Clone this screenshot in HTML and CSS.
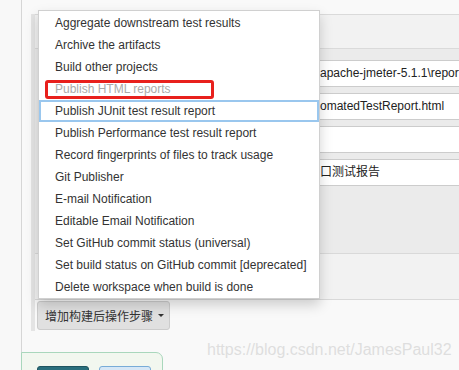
FILE: index.html
```html
<!DOCTYPE html>
<html lang="zh">
<head>
<meta charset="utf-8">
<title>Post-build actions</title>
<link rel="stylesheet" href="styles.css">
</head>
<body>
<div class="page">
  <aside class="side"></aside>
  <main class="main">
    <section class="chunk">
      <div class="chunk-head"></div>
      <div class="chunk-body">
        <div class="field"><span class="lbl"></span><div class="input">apache-jmeter-5.1.1\report</div></div>
        <div class="field"><span class="lbl"></span><div class="input">omatedTestReport.html</div></div>
        <div class="field"><span class="lbl"></span><div class="input"></div></div>
        <div class="field"><span class="lbl"></span><div class="input">口测试报告</div></div>
      </div>
      <div class="chunk-foot"></div>
      <div class="btn-row">
        <button class="add-btn">增加构建后操作步骤<span class="caret"></span></button>
      </div>
    </section>
    <div class="bottom-bar">
      <button class="btn save" aria-label="保存"></button>
      <button class="btn apply" aria-label="应用"></button>
    </div>
  </main>

  <ul class="menu">
    <li class="item">Aggregate downstream test results</li>
    <li class="item">Archive the artifacts</li>
    <li class="item">Build other projects</li>
    <li class="item disabled">Publish HTML reports<span class="mark"></span></li>
    <li class="item active">Publish JUnit test result report</li>
    <li class="item">Publish Performance test result report</li>
    <li class="item">Record fingerprints of files to track usage</li>
    <li class="item">Git Publisher</li>
    <li class="item">E-mail Notification</li>
    <li class="item">Editable Email Notification</li>
    <li class="item">Set GitHub commit status (universal)</li>
    <li class="item">Set build status on GitHub commit [deprecated]</li>
    <li class="item">Delete workspace when build is done</li>
  </ul>

  <div class="watermark">https://blog.csdn.net/JamesPaul32</div>
</div>
</body>
</html>
```

FILE: styles.css
```css
html, body {
  margin: 0;
  padding: 0;
}

body {
  font-family: "Liberation Sans", Arial, "Noto Sans CJK SC", sans-serif;
  font-size: 12px;
  color: #333;
  background: #f8f8f8;
}

.page {
  position: relative;
  display: flex;
  width: 459px;
  height: 370px;
  overflow: hidden;
}

.side {
  flex: none;
  width: 21px;
  background: #f8f8f8;
}

.main {
  flex: 1;
  min-width: 0;
  border-left: 1px solid #d6d6d6;
  background: #f9f9f9;
  padding-left: 9px;
}

.chunk {
  margin-top: 14px;
  border-left: 4px solid #e4e4e4;
}

.chunk-head {
  height: 33px;
  background: #f2f2f2;
  border-top: 1px solid #dadada;
  border-bottom: 1px solid #dadada;
}

.chunk-body {
  display: flex;
  flex-direction: column;
  gap: 6px;
  padding: 11px 0 67px;
  background: #ebebeb;
}

.field {
  display: grid;
  grid-template-columns: 283px 150px;
}

.input {
  box-sizing: border-box;
  height: 27px;
  padding-left: 1px;
  border: 1px solid #cccccc;
  border-right: 0;
  background: #ffffff;
  font-family: "Liberation Sans", Arial, "Noto Sans CJK SC", sans-serif;
  font-size: 12px;
  line-height: 25px;
  color: #222;
  white-space: nowrap;
}

.chunk-foot {
  height: 45px;
  background: #f2f2f2;
  border-top: 1px solid #d9d9d9;
  border-bottom: 1px solid #d9d9d9;
}

.btn-row {
  padding: 1px 0 1px 2px;
}

.add-btn {
  box-sizing: border-box;
  display: flex;
  align-items: center;
  width: 133px;
  height: 29px;
  margin: 0;
  padding: 0 0 0 7px;
  border: 1px solid #cccccc;
  border-radius: 3px;
  background: #e0e0e0;
  font-family: "Noto Sans CJK SC", sans-serif;
  font-size: 12px;
  color: #333;
}

.caret {
  margin-left: 5px;
  width: 0;
  height: 0;
  border-top: 3px solid #333;
  border-left: 3px solid transparent;
  border-right: 3px solid transparent;
}

.bottom-bar {
  display: flex;
  gap: 10px;
  box-sizing: border-box;
  width: 142px;
  height: 40px;
  margin: 21px 0 0 -10px;
  padding: 13px 0 0 15px;
  border: 1px solid #a9d7bc;
  border-top-right-radius: 7px;
  background: #f2f7ef;
}

.btn {
  flex: none;
  box-sizing: border-box;
  width: 52px;
  height: 28px;
  margin: 0;
  padding: 0;
  border-radius: 3px;
}

.save {
  background: #2a6f7c;
  border: 1px solid #1f5560;
}

.apply {
  background: #d6e7f6;
  border: 1px solid #78acd8;
}

.menu {
  position: absolute;
  left: 38px;
  top: 10px;
  box-sizing: border-box;
  width: 282px;
  margin: 0;
  padding: 1px 0 0;
  list-style: none;
  background: #ffffff;
  border: 1px solid #d0d0d0;
  box-shadow: 0 6px 12px rgba(0, 0, 0, 0.175);
}

.item {
  position: relative;
  height: 22px;
  padding-left: 16px;
  line-height: 22px;
  color: #333;
  white-space: nowrap;
}

.item.disabled {
  color: #aaaaaa;
}

.item.active {
  outline: 2px solid #9ac7ee;
  outline-offset: -2px;
}

.mark {
  position: absolute;
  left: 6px;
  top: 2px;
  width: 169px;
  height: 19px;
  box-sizing: border-box;
  border: 3px solid #e8201c;
  border-radius: 3px;
}

.watermark {
  position: absolute;
  left: 207px;
  top: 341px;
  font-family: "Liberation Sans", Arial, sans-serif;
  font-size: 16px;
  line-height: 18px;
  color: rgba(195, 195, 195, 0.5);
  white-space: nowrap;
}
```
